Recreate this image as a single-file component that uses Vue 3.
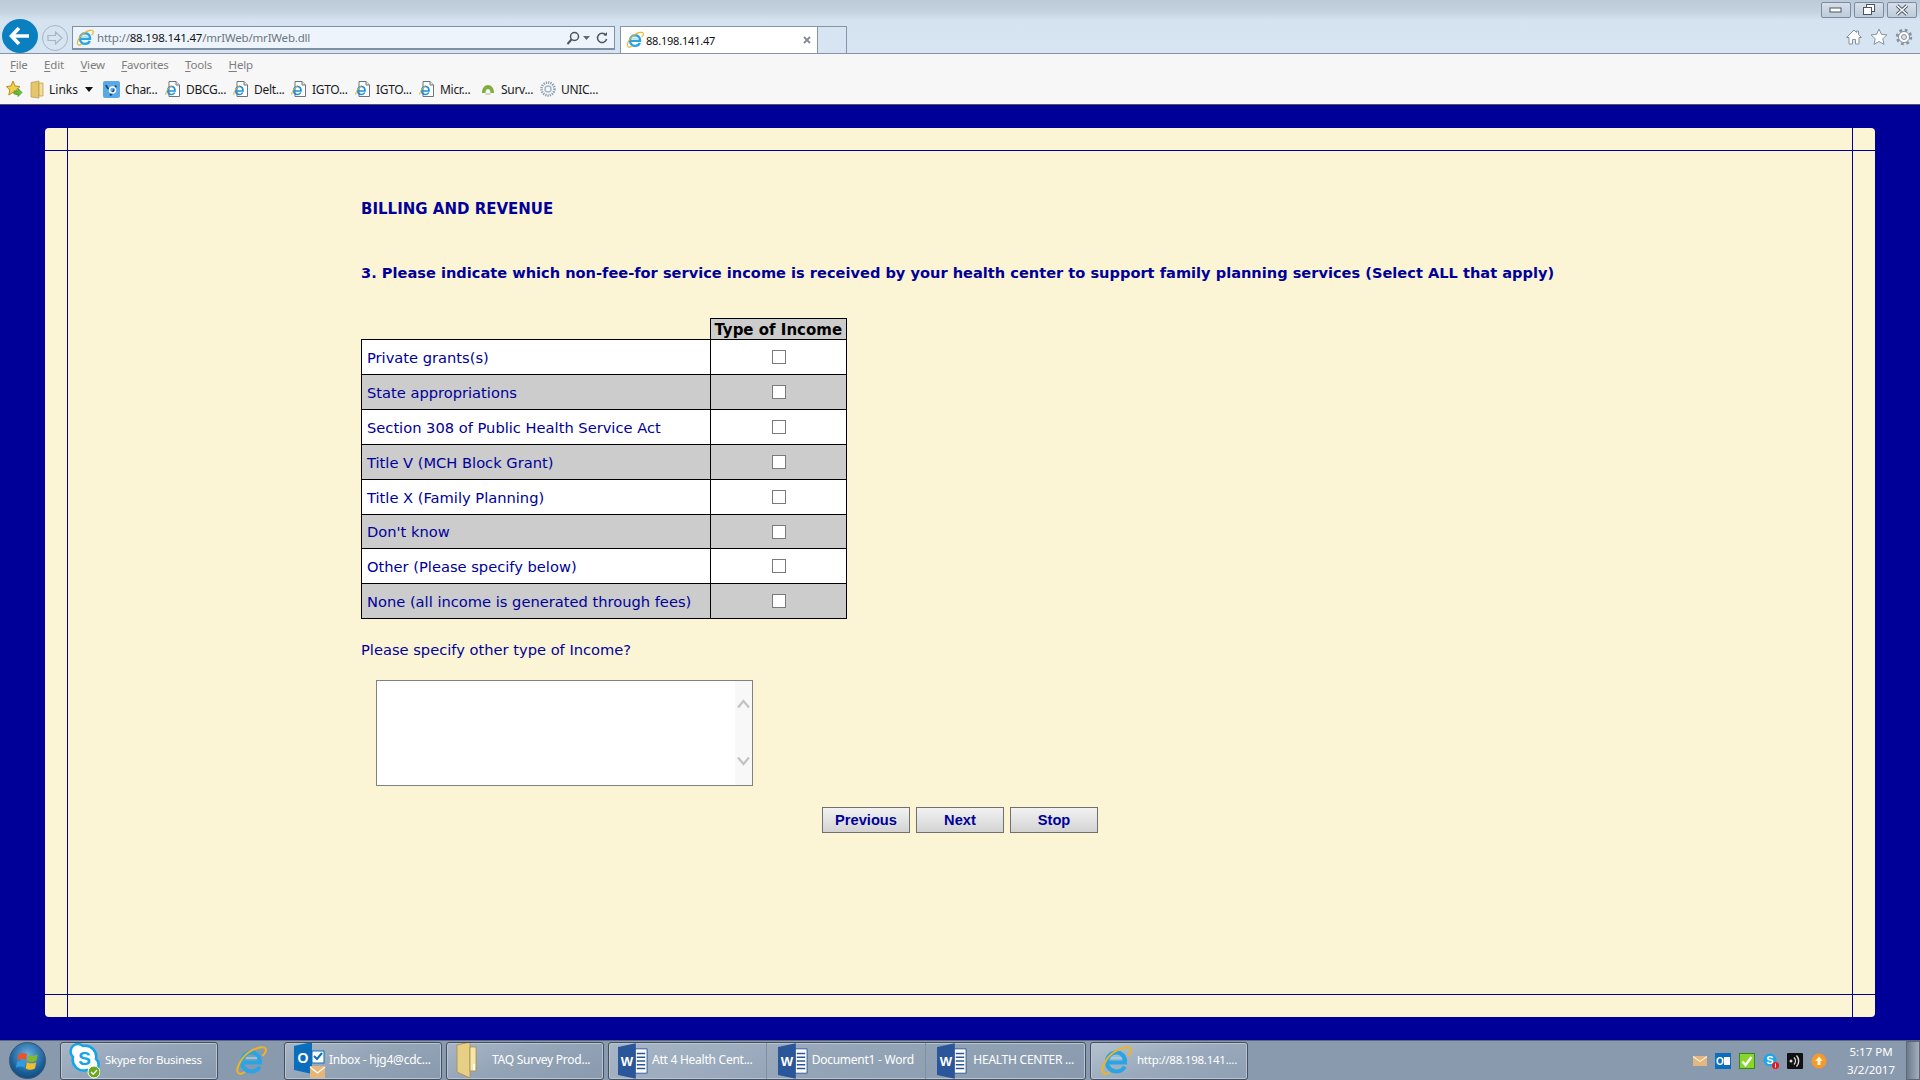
<script setup>
const menus = ['File', 'Edit', 'View', 'Favorites', 'Tools', 'Help']
const favs = [
  { icon: 'doc', label: 'DBCG...', w: 68 },
  { icon: 'doc', label: 'Delt...', w: 58 },
  { icon: 'doc', label: 'IGTO...', w: 64 },
  { icon: 'doc', label: 'IGTO...', w: 64 },
  { icon: 'doc', label: 'Micr...', w: 61 },
  { icon: 'surv', label: 'Surv...', w: 60 },
  { icon: 'unic', label: 'UNIC...', w: 60 }
]
const rows = [
  'Private grants(s)',
  'State appropriations',
  'Section 308 of Public Health Service Act',
  'Title V (MCH Block Grant)',
  'Title X (Family Planning)',
  "Don't know",
  'Other (Please specify below)',
  'None (all income is generated through fees)'
]
const wordGroup = ['Att 4 Health Cent...', 'Document1 - Word', 'HEALTH CENTER ...']
</script>

<template>
  <div class="screen">
    <svg class="defs" width="0" height="0" aria-hidden="true">
      <defs>
        <symbol id="ie" viewBox="0 0 32 32">
          <path d="M8 17.5h17c.4-6-3.6-10-8.6-10-5.400 0-9.400 4-9.400 9.500 0 5.500 4 9.500 9.400 9.500 3.800 0 6.800-1.800 8.200-5" fill="none" stroke="#2ba4e6" stroke-width="4.200"/>
          <path d="M11 13h11" stroke="#8fd8f6" stroke-width="1.500"/>
          <path d="M3 27.500C.5 24.500 6 12 15 6.500c7-4.300 14-5.500 15.500-3 1.200 2-.5 5-3 7.500" fill="none" stroke="#eeb422" stroke-width="2"/>
          <path d="M3 27.500c1.200 2 4 1.500 7-.5" fill="none" stroke="#eeb422" stroke-width="2"/>
        </symbol>
        <symbol id="doc" viewBox="0 0 16 16">
          <path d="M4 .5h7l3.500 3.500v11.500H4z" fill="#fff" stroke="#6f7378"/>
          <path d="M11 .5V4h3.500" fill="#e8e8e8" stroke="#6f7378"/>
          <path d="M2.500 10h7.500c.2-3-1.600-4.500-3.500-4.500-2.200 0-3.700 1.800-3.700 4 0 2.400 1.600 4 3.700 4 1.500 0 2.700-.7 3.300-2" fill="none" stroke="#1e8fdc" stroke-width="1.700"/>
          <path d="M.8 13.800C.2 12 3 6.500 7 4.500" fill="none" stroke="#e9b021" stroke-width="1"/>
        </symbol>
        <symbol id="word" viewBox="0 0 32 38">
          <path d="M18 6h13v26H18z" fill="#fff" stroke="#2b579a"/>
          <path d="M20 11h9M20 15h9M20 19h9M20 23h9M20 27h9" stroke="#2b579a" stroke-width="1.600"/>
          <path d="M0 4 19 0v38L0 34z" fill="#2b579a"/>
          <text x="9.500" y="24" text-anchor="middle" font-family="Liberation Sans, sans-serif" font-weight="700" font-size="14" fill="#fff">W</text>
        </symbol>
      </defs>
    </svg>

    <header class="chrome">
      <div class="title-row">
        <button class="win" aria-label="Minimize"><svg width="14" height="8" viewBox="0 0 14 8"><rect x="1" y="2" width="11" height="4" fill="#fff" stroke="#4b5563"/></svg></button>
        <button class="win" aria-label="Restore"><svg width="14" height="12" viewBox="0 0 14 12"><rect x="4.500" y=".5" width="8" height="7" fill="#fff" stroke="#4b5563"/><rect x="1.500" y="3.500" width="8" height="7" fill="#fff" stroke="#4b5563"/></svg></button>
        <button class="win" aria-label="Close"><svg width="14" height="12" viewBox="0 0 14 12"><path d="M2 1.500l10 9M12 1.500l-10 9" stroke="#4b5563" stroke-width="3.400"/><path d="M2 1.500l10 9M12 1.500l-10 9" stroke="#fff" stroke-width="1.600"/></svg></button>
      </div>
      <div class="nav-row">
        <div class="back">
          <svg width="22" height="20" viewBox="0 0 22 20"><path d="M10 2 2.500 10l7.500 8M3 10h17" fill="none" stroke="#fff" stroke-width="3.600"/></svg>
        </div>
        <div class="forward">
          <svg width="16" height="14" viewBox="0 0 16 14"><path d="M8.500 1 15 7l-6.500 6V9.500H1v-5h7.500z" fill="none" stroke="#a9b5c2" stroke-width="1.200"/></svg>
        </div>
        <div class="address">
          <svg class="addr-ie" width="18" height="18"><use href="#ie"/></svg>
          <span class="url"><span class="dim">http://</span>88.198.141.47<span class="dim">/mrIWeb/mrIWeb.dll</span></span>
          <svg width="14" height="14" viewBox="0 0 14 14"><circle cx="8.500" cy="5.500" r="4" fill="none" stroke="#4d5560" stroke-width="1.500"/><path d="M5.500 8.500 1.500 13" stroke="#4d5560" stroke-width="2"/></svg>
          <svg class="caret" width="7" height="4" viewBox="0 0 7 4"><path d="M0 0h7L3.500 4z" fill="#606a75"/></svg>
          <svg width="12" height="14" viewBox="0 0 12 14"><path d="M9.800 4.200A4.600 4.600 0 1 0 10.600 8" fill="none" stroke="#4d5560" stroke-width="1.500"/><path d="M7.500 4.500h3.500V1z" fill="#4d5560"/></svg>
        </div>
        <div class="tab">
          <svg width="18" height="18"><use href="#ie"/></svg>
          <span class="tab-text">88.198.141.47</span>
          <svg width="8" height="8" viewBox="0 0 8 8"><path d="M1 1l6 6M7 1 1 7" stroke="#858b92" stroke-width="1.800"/></svg>
        </div>
        <div class="new-tab"></div>
        <div class="tools">
          <svg width="18" height="18" viewBox="0 0 18 18"><path d="M9 2 1.500 9.500H4V16h3.500v-4.500h3V16H14V9.500h2.500L13.500 6.500V3h-2v1.500z" fill="#fff" stroke="#87929e"/></svg>
          <svg width="18" height="18" viewBox="0 0 18 18"><path d="m9 1 2.400 5.300 5.600.6-4.200 3.800 1.200 5.700L9 13.500l-5 2.900 1.200-5.700L1 6.900l5.600-.6z" fill="#fff" stroke="#87929e"/></svg>
          <svg width="18" height="18" viewBox="0 0 18 18"><circle cx="9" cy="9" r="6.500" fill="none" stroke="#87929e" stroke-width="3.400" stroke-dasharray="2.550 2.550"/><circle cx="9" cy="9" r="5.500" fill="#fff" stroke="#87929e" stroke-width="1"/><circle cx="9" cy="9" r="2.500" fill="#d6e3f0" stroke="#87929e"/></svg>
        </div>
      </div>
    </header>

    <nav class="menu-bar">
      <span v-for="m in menus" :key="m" class="menu-item"><u>{{ m[0] }}</u>{{ m.slice(1) }}</span>
    </nav>

    <div class="fav-bar">
      <svg class="fav-star" width="17" height="18" viewBox="0 0 17 18"><path d="m7 1 2 5 5 .5-3.800 3.500 1 5-4.200-2.600L2.800 15l1-5L.5 6.500 5 6z" fill="#f4cf4a" stroke="#b78f1c"/><path d="M8 11h4V8.500l4 4-4 4V14H8z" fill="#67c23a" stroke="#3f8a1f" stroke-width=".7"/></svg>
      <svg class="fav-folder" width="14" height="19" viewBox="0 0 14 19"><path d="M1 2.500 9 1v17l-8-1z" fill="#e6c66c" stroke="#b89a46" stroke-width=".7"/><path d="M9 3h4v13H9z" fill="#f3dc94" stroke="#b89a46" stroke-width=".7"/></svg>
      <span class="fav-links">Links</span>
      <svg class="fav-caret" width="8" height="5" viewBox="0 0 8 5"><path d="M0 0h8L4 5z" fill="#111"/></svg>
      <span class="fav fav-char">
        <svg width="17" height="17" viewBox="0 0 17 17"><rect width="17" height="17" rx="2" fill="#5aa9e6"/><path d="M3 4c1 3 2 4 4 4M13 4.500C12 9 9.500 12 7 14.500" fill="none" stroke="#12467e" stroke-width="1.800"/><circle cx="9.500" cy="9" r="3" fill="none" stroke="#fff" stroke-width="1.500"/></svg>
        <span>Char...</span>
      </span>
      <span v-for="(f, i) in favs" :key="i" class="fav" :style="{ width: f.w + 'px' }">
        <svg v-if="f.icon === 'doc'" width="16" height="16"><use href="#doc"/></svg>
        <svg v-else-if="f.icon === 'surv'" width="16" height="16" viewBox="0 0 16 16"><path d="M2 12c0-5 2.500-8 6-8s6 3 6 8h-3.500c0-2.500-1-4-2.500-4s-2.500 1.500-2.500 4z" fill="#7fae3c"/><path d="M5.500 12h5v2h-5z" fill="#d2d7c6"/></svg>
        <svg v-else width="16" height="16" viewBox="0 0 16 16"><circle cx="8" cy="8" r="6.500" fill="none" stroke="#8aa0b5" stroke-width="2.600" stroke-dasharray="1.300 1"/><circle cx="8" cy="8" r="3" fill="none" stroke="#a7b7c6" stroke-width="1.500"/></svg>
        <span>{{ f.label }}</span>
      </span>
    </div>

    <main class="page">
      <div class="card">
        <div class="cell corner-tl"></div><div class="cell"></div><div class="cell corner-tr"></div>
        <div class="cell"></div>
        <div class="cell body">
          <h1 class="heading">BILLING AND REVENUE</h1>
          <p class="question">3. Please indicate which non-fee-for service income is received by your health center to support family planning services (Select ALL that apply)</p>
          <table class="grid">
            <thead>
              <tr><th class="blank"></th><th class="head">Type of Income</th></tr>
            </thead>
            <tbody>
              <tr v-for="(r, i) in rows" :key="r" :class="{ odd: i % 2 === 1 }">
                <td class="label">{{ r }}</td>
                <td class="check"><input type="checkbox" class="box" :aria-label="r"></td>
              </tr>
            </tbody>
          </table>
          <p class="specify">Please specify other type of Income?</p>
          <div class="textbox">
            <textarea class="area" aria-label="Please specify other type of Income?"></textarea>
            <div class="scroll">
              <svg width="13" height="10" viewBox="0 0 13 10"><path d="M1 8.500 6.500 2 12 8.500" fill="none" stroke="#c3c3c3" stroke-width="2.200"/></svg>
              <svg width="13" height="10" viewBox="0 0 13 10"><path d="M1 1.500 6.500 8 12 1.500" fill="none" stroke="#c3c3c3" stroke-width="2.200"/></svg>
            </div>
          </div>
          <div class="actions">
            <button class="btn">Previous</button>
            <button class="btn">Next</button>
            <button class="btn">Stop</button>
          </div>
        </div>
        <div class="cell"></div>
        <div class="cell corner-bl"></div><div class="cell"></div><div class="cell corner-br"></div>
      </div>
    </main>

    <footer class="taskbar">
      <div class="orb">
        <svg width="24" height="24" viewBox="0 0 20 20">
          <path d="M2 4.500C4.500 3 7 3 9.300 4.300l-1 5C6 8 4 8 1 9.500z" fill="#e8552c"/>
          <path d="M10.300 4.700C12.500 6 15 6 18 4.500l-1 5.300c-2.800 1.400-5.200 1.400-7.700.1z" fill="#84b92f"/>
          <path d="M.8 10.600C3.500 9.200 5.800 9.200 8.100 10.500l-1 5C5 14.200 2.800 14.200 0 15.600z" fill="#2f9be0"/>
          <path d="M9.100 11C11.500 12.300 14 12.300 16.800 11l-1 5.200c-2.800 1.400-5.200 1.400-7.700 0z" fill="#f5bd2a"/>
        </svg>
      </div>
      <div class="task skype">
        <svg width="31" height="36" viewBox="0 0 31 36">
          <path d="M14 3a11 11 0 0 1 13 13 7 7 0 0 1-9 11A11 11 0 0 1 4 14 7 7 0 0 1 14 3z" fill="#fff" stroke="#12a5e8" stroke-width="2.500"/>
          <text x="15.500" y="22" text-anchor="middle" font-family="Liberation Sans, sans-serif" font-weight="700" font-size="19" fill="#12a5e8">S</text>
          <circle cx="25" cy="29" r="6" fill="#6aa81e" stroke="#fff"/>
          <path d="m22 29 2.200 2.200L28 27" fill="none" stroke="#fff" stroke-width="1.300"/>
        </svg>
        <span>Skype for Business</span>
      </div>
      <div class="pinned"><svg width="32" height="32"><use href="#ie"/></svg></div>
      <div class="task inbox">
        <svg width="32" height="38" viewBox="0 0 32 38">
          <path d="M0 4 18 0v32L0 28z" fill="#0a6ebd"/>
          <text x="9" y="21" text-anchor="middle" font-family="Liberation Sans, sans-serif" font-weight="700" font-size="14" fill="#fff">O</text>
          <rect x="18" y="9" width="12" height="12" fill="#fff" stroke="#0a6ebd"/>
          <path d="m20 14 3 3 5-6" fill="none" stroke="#0a6ebd" stroke-width="2"/>
          <path d="M16 24h15v12H16z" fill="#e6b57c"/>
          <path d="m16 25 7.500 6 7.500-6" fill="none" stroke="#fff" stroke-width="1.300"/>
        </svg>
        <span>Inbox - hjg4@cdc...</span>
      </div>
      <div class="task">
        <svg width="32" height="38" viewBox="0 0 32 38">
          <path d="M1 3 14 0v36L1 30z" fill="#e7cf86" stroke="#a48e4e" stroke-width=".8"/>
          <path d="M14 5h6v24h-6z" fill="#f6e7a8" stroke="#a48e4e" stroke-width=".8"/>
          <rect x="17" y="22" width="2" height="6" fill="#fff"/>
        </svg>
        <span class="folder-text">TAQ Survey Prod...</span>
      </div>
      <div class="task word-group">
        <div v-for="w in wordGroup" :key="w" class="word-item">
          <svg width="30" height="36"><use href="#word"/></svg>
          <span>{{ w }}</span>
        </div>
      </div>
      <div class="task active">
        <svg width="32" height="32"><use href="#ie"/></svg>
        <span>http://88.198.141....</span>
      </div>
      <div class="tray">
        <svg width="14" height="10" viewBox="0 0 14 10"><rect width="14" height="10" fill="#e3b87f"/><path d="m0 .5 7 5 7-5" fill="none" stroke="#fff" stroke-width="1"/></svg>
        <svg width="16" height="16" viewBox="0 0 16 16"><rect width="16" height="16" fill="#0a6ebd"/><rect x="9" y="4" width="6" height="8" fill="#fff"/><text x="5" y="12" text-anchor="middle" font-family="Liberation Sans, sans-serif" font-weight="700" font-size="10" fill="#fff">O</text></svg>
        <svg width="16" height="16" viewBox="0 0 16 16"><rect x=".5" y=".5" width="15" height="15" fill="#8bd42c" stroke="#2f8d1f"/><path d="m3.500 8.500 3 3.500 6-8" fill="none" stroke="#fff" stroke-width="2.400"/></svg>
        <svg width="16" height="16" viewBox="0 0 16 16"><circle cx="7" cy="7" r="6.500" fill="#1ea6e8"/><text x="7" y="11" text-anchor="middle" font-family="Liberation Sans, sans-serif" font-weight="700" font-size="11" fill="#fff">S</text><circle cx="12.500" cy="12.500" r="3.500" fill="#e01b24"/><rect x="12" y="10.500" width="1" height="4" fill="#fff"/></svg>
        <svg width="16" height="16" viewBox="0 0 16 16"><rect width="16" height="16" rx="1" fill="#111"/><path d="M7 4.500a5 5 0 0 1 0 7M9.500 2.500a8 8 0 0 1 0 11" fill="none" stroke="#ddd" stroke-width="1.400"/><circle cx="4" cy="8" r="1.500" fill="#ddd"/></svg>
        <svg width="16" height="16" viewBox="0 0 16 16"><circle cx="8" cy="8" r="7.500" fill="#f29a2e"/><path d="m8 3.500 3.800 4.500H9.500v4h-3V8H4.200z" fill="#fff3c9"/></svg>
      </div>
      <div class="clock">
        <span>5:17 PM</span>
        <span>3/2/2017</span>
      </div>
      <div class="show-desktop"></div>
    </footer>
  </div>
</template>

<style scoped>
.screen {
  width: 1920px;
  height: 1080px;
  display: flex;
  flex-direction: column;
  overflow: hidden;
  font-family: "Noto Sans", sans-serif;
  background: #000099;
}
.defs { position: absolute; }

/* browser chrome */
.chrome {
  height: 54px;
  flex: none;
  border-bottom: 1px solid #8594a8;
  box-sizing: border-box;
  background: linear-gradient(#bccad8 0, #c5d3e1 12px, #d5e3f0 20px, #d7e4f1 100%);
}
.title-row {
  height: 19px;
  box-sizing: border-box;
  padding: 2px 3px 1px 0;
  display: flex;
  justify-content: flex-end;
  gap: 3px;
}
.win {
  width: 30px;
  height: 16px;
  padding: 0;
  border: 1px solid #7d8ba1;
  border-radius: 2px;
  background: linear-gradient(#d6dfe9, #bdcbda);
  display: flex;
  align-items: center;
  justify-content: center;
}
.nav-row {
  height: 34px;
  display: flex;
  align-items: flex-end;
}
.back {
  width: 36px;
  height: 34px;
  margin-left: 2px;
  border-radius: 50%;
  background: #0a80c0;
  display: flex;
  align-items: center;
  justify-content: center;
  flex: none;
}
.forward {
  width: 26px;
  height: 26px;
  margin: 0 4px 2px 4px;
  border: 1px solid #a9b5c2;
  box-sizing: border-box;
  border-radius: 50%;
  display: flex;
  align-items: center;
  justify-content: center;
  flex: none;
}
.address {
  width: 543px;
  height: 24px;
  margin-bottom: 3px;
  box-sizing: border-box;
  border: 1px solid #7f8fa4;
  border-bottom-width: 2px;
  background: #eef4fb;
  display: flex;
  align-items: center;
  padding: 0 6px 0 3px;
  flex: none;
}
.addr-ie { margin-right: 3px; }
.url {
  flex: 1;
  font-size: 11.5px;
  color: #111;
  letter-spacing: -.2px;
}
.dim { color: #6c747d; }
.caret { margin: 0 6px 0 3px; }
.tab {
  width: 198px;
  height: 27px;
  margin-left: 5px;
  box-sizing: border-box;
  background: #fff;
  border: 1px solid #8594a8;
  border-bottom: 0;
  display: flex;
  align-items: center;
  padding: 0 6px 0 5px;
  flex: none;
}
.tab-text {
  flex: 1;
  font-size: 11px;
  color: #111;
  margin-left: 2px;
  letter-spacing: -.2px;
}
.new-tab {
  width: 29px;
  height: 27px;
  box-sizing: border-box;
  border: 1px solid #8594a8;
  border-left: 0;
  border-bottom: 0;
  background: #d7e4f1;
  flex: none;
}
.tools {
  margin-left: auto;
  display: flex;
  gap: 7px;
  padding: 0 7px 7px 0;
}

.menu-bar {
  height: 22px;
  flex: none;
  box-sizing: border-box;
  background: #f7f7f7;
  display: flex;
  align-items: center;
  padding: 0 0 2px 10px;
  font-size: 11.5px;
  letter-spacing: -.2px;
  color: #7d7d7d;
}
.menu-item { margin-right: 16.5px; }
.menu-item u { text-underline-offset: 2px; }

.fav-bar {
  height: 29px;
  flex: none;
  box-sizing: border-box;
  background: #f7f7f7;
  border-bottom: 1px solid #555;
  display: flex;
  align-items: center;
  padding: 0 0 2px 6px;
  font-size: 12px;
  color: #1a1a1a;
}
.fav-star { margin-right: 7px; }
.fav-folder { margin-right: 5px; }
.fav-links { width: 36px; }
.fav-caret { margin-right: 10px; }
.fav {
  display: flex;
  align-items: center;
  gap: 5px;
  white-space: nowrap;
  letter-spacing: -.3px;
  flex: none;
}
.fav-char { width: 62px; }

/* page */
.page {
  flex: 1;
  min-height: 0;
  padding: 23px 45px;
  background: #000099;
  display: flex;
}
.card {
  flex: 1;
  display: grid;
  grid-template-columns: 22px 1fr 22px;
  grid-template-rows: 22px 1fr 22px;
  gap: 1px;
  background: #000099;
  border-radius: 4px;
  overflow: hidden;
}
.cell { background: #fbf5d6; }
.body {
  padding: 49px 0 0 293px;
  color: #000099;
  font-family: "DejaVu Sans", Verdana, sans-serif;
  font-size: 14.67px;
}
.heading {
  margin: 0;
  font-size: 15px;
  line-height: 18px;
  font-weight: 700;
}
.question {
  margin: 46px 0 0;
  font-size: 14.6px;
  line-height: 18px;
  font-weight: 700;
  white-space: nowrap;
}
.grid {
  margin-top: 36px;
  border-collapse: collapse;
  table-layout: fixed;
  width: 486px;
}
.blank {
  width: 348px;
  padding: 0;
  border: 0;
}
.head {
  height: 21px;
  padding: 2px 0 0;
  box-sizing: border-box;
  background: #cccccc;
  border: 1px solid #000;
  color: #000;
  font-weight: 700;
  font-size: 15px;
  line-height: 16px;
  white-space: nowrap;
}
.grid td {
  height: 34px;
  padding: 0;
  border: 1px solid #000;
  background: #fff;
}
.grid tbody tr:nth-child(6) td { height: 33px; }
.grid .odd td { background: #cccccc; }
.label { padding-left: 5px !important; }
.grid .check { text-align: center; padding-left: 2px; }
.box {
  appearance: none;
  display: block;
  width: 14px;
  height: 14px;
  margin: 0 auto;
  background: #fff;
  border: 1px solid #7a7a7a;
  box-sizing: border-box;
}
.specify {
  margin: 22px 0 0;
  line-height: 18px;
}
.textbox {
  width: 377px;
  height: 106px;
  margin: 21px 0 0 15px;
  box-sizing: border-box;
  border: 1px solid #808080;
  background: #fff;
  display: flex;
}
.area {
  flex: 1;
  min-width: 0;
  border: 0;
  padding: 0;
  margin: 0;
  resize: none;
  outline: none;
  background: #fff;
}
.scroll {
  width: 17px;
  background: #f8f8f8;
  display: flex;
  flex-direction: column;
  align-items: center;
  justify-content: space-between;
  padding: 18px 0 19px;
  box-sizing: border-box;
}
.actions {
  display: flex;
  gap: 6px;
  margin: 21px 0 0 461px;
}
.btn {
  width: 88px;
  height: 26px;
  padding: 0;
  border: 1px solid #707070;
  background: linear-gradient(#f2f2f2, #d3d3d3);
  color: #000099;
  font-family: "Liberation Sans", Arial, sans-serif;
  font-weight: 700;
  font-size: 14.67px;
}

/* taskbar */
.taskbar {
  height: 40px;
  flex: none;
  box-sizing: border-box;
  border-top: 1px solid #5c6878;
  background: #8a9aae;
  display: flex;
  align-items: center;
  font-size: 12px;
  color: #fff;
}
.orb {
  width: 37px;
  height: 37px;
  margin: 0 14px 0 9px;
  border-radius: 50%;
  background: radial-gradient(circle at 50% 35%, #6fb4e0, #1a5f99 60%, #0d3a66);
  border: 1px solid #3a5470;
  box-sizing: border-box;
  display: flex;
  align-items: center;
  justify-content: center;
  flex: none;
}
.task {
  width: 158px;
  height: 38px;
  box-sizing: border-box;
  border: 1px solid #44505f;
  border-radius: 3px;
  background: linear-gradient(160deg, #a8b6c6 0, #95a5b8 45%, #8a9aae 100%);
  box-shadow: inset 0 0 0 1px #b9c5d2;
  display: flex;
  align-items: center;
  gap: 5px;
  padding-left: 9px;
  white-space: nowrap;
  flex: none;
  margin-right: 4px;
  overflow: hidden;
}
.task span {
  letter-spacing: -.25px;
  margin-top: -2px;
}
.skype { margin-right: 0; font-size: 11.5px; padding-left: 8px; }
.inbox { gap: 3px; }
.pinned {
  width: 66px;
  display: flex;
  justify-content: center;
  flex: none;
}
.folder-text { margin-left: -1px; }
.word-group {
  width: 478px;
  padding: 0;
  gap: 0;
}
.word-item {
  flex: 1;
  height: 100%;
  display: flex;
  align-items: center;
  gap: 4px;
  padding-left: 11px;
  box-sizing: border-box;
  border-right: 1px solid #808fa2;
}
.word-item:first-child { padding-left: 9px; }
.word-item:last-child { border-right: 0; gap: 6px; }
.active {
  font-size: 11.5px;
  background: linear-gradient(160deg, #b4c1cf 0, #9aaabc 50%, #8f9fb3 100%);
}
.tray {
  margin-left: auto;
  display: flex;
  align-items: center;
  gap: 8px;
}
.clock {
  width: 62px;
  margin-left: 13px;
  display: flex;
  flex-direction: column;
  align-items: center;
  line-height: 18px;
  font-size: 11.5px;
}
.show-desktop {
  width: 14px;
  height: 39px;
  margin-left: 4px;
  box-sizing: border-box;
  border: 1px solid #5c6878;
  background: linear-gradient(90deg, #6c7a8c, #a3afbd);
  flex: none;
}
</style>
